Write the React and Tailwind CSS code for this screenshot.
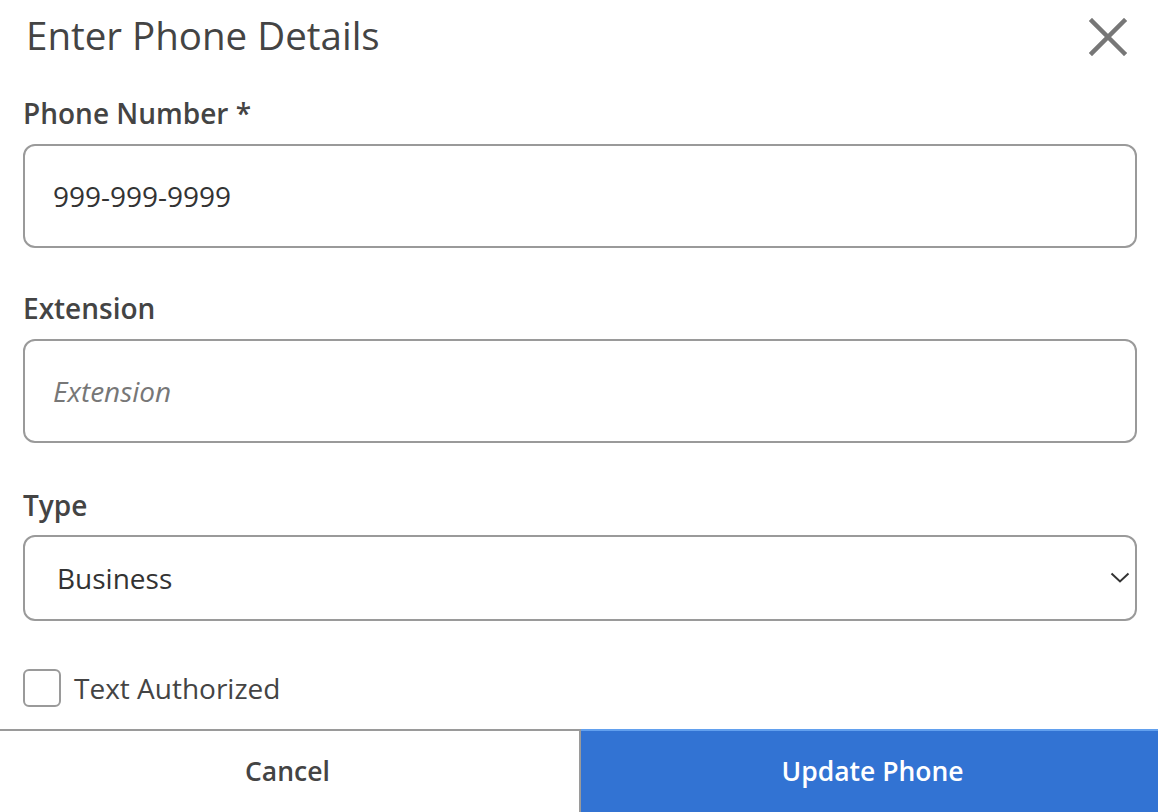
import { useState } from 'react';

const font = { fontFamily: '"Open Sans", "Noto Sans", sans-serif' };

const CloseIcon = () => (
  <svg width="38" height="38" viewBox="0 0 38 38" fill="none">
    <path d="M3 3 L35 35 M35 3 L3 35" stroke="#777" strokeWidth="4.5" strokeLinecap="square" />
  </svg>
);

const Chevron = () => (
  <svg width="20" height="11" viewBox="0 0 20 11" fill="none">
    <path d="M1.5 1.5 L10 9.5 L18.5 1.5" stroke="#333" strokeWidth="2" />
  </svg>
);

const Label = ({ children, className = '' }) => (
  <label className={`block text-[28px] leading-[36px] font-semibold text-[#444] ${className}`}>
    {children}
  </label>
);

export default function App() {
  const [phone, setPhone] = useState('999-999-9999');
  const [ext, setExt] = useState('');
  const [type, setType] = useState('Business');
  const [textOk, setTextOk] = useState(false);

  return (
    <div className="w-[1158px] h-[812px] bg-white flex flex-col overflow-hidden" style={font}>
      {/* ── header ───────────────────────────────────────────── */}
      <div className="h-[95px] flex items-start justify-between pl-[26px] pr-[31px]">
        <h1 className="mt-[10px] text-[38.5px] leading-[50px] font-normal text-[#444]">Enter Phone Details</h1>
        <button className="mt-[18px]">
          <CloseIcon />
        </button>
      </div>

      {/* ── form ─────────────────────────────────────────────── */}
      <div className="flex-1 flex flex-col pl-[23px] pr-[21px]">
        <Label>Phone Number *</Label>
        <input
          value={phone}
          onChange={(e) => setPhone(e.target.value)}
          className="mt-[13px] h-[104px] w-full rounded-[12px] border-2 border-[#9a9a9a] px-[28px] text-[28px] text-[#333] outline-none"
        />

        <Label className="mt-[42px]">Extension</Label>
        <input
          value={ext}
          onChange={(e) => setExt(e.target.value)}
          placeholder="Extension"
          className="mt-[13px] h-[104px] w-full rounded-[12px] border-2 border-[#9a9a9a] px-[28px] text-[28px] text-[#333] outline-none placeholder:italic placeholder:text-[#777]"
        />

        <Label className="mt-[44px]">Type</Label>
        <div className="relative mt-[12px]">
          <select
            value={type}
            onChange={(e) => setType(e.target.value)}
            className="appearance-none h-[86px] w-full rounded-[12px] border-2 border-[#9a9a9a] bg-white pl-[32px] pr-[40px] text-[28px] text-[#333] outline-none"
          >
            <option>Business</option>
            <option>Home</option>
            <option>Mobile</option>
          </select>
          <span className="pointer-events-none absolute right-[7px] top-[37px]">
            <Chevron />
          </span>
        </div>

        <label className="mt-[48px] flex items-center gap-[13px] cursor-pointer">
          <input
            type="checkbox"
            checked={textOk}
            onChange={(e) => setTextOk(e.target.checked)}
            className="appearance-none w-[38px] h-[38px] rounded-[6px] border-2 border-[#9a9a9a] bg-white"
          />
          <span className="text-[28px] leading-[36px] text-[#444]">Text Authorized</span>
        </label>
      </div>

      {/* ── footer ───────────────────────────────────────────── */}
      <div className="h-[83px] flex border-t-2 border-[#9a9a9a]">
        <button className="w-[581px] pr-[4px] bg-white border-r-2 border-[#9a9a9a] text-[26.5px] font-semibold text-[#444]">
          Cancel
        </button>
        <button className="flex-1 pl-[6px] -mt-[2px] bg-[#3273d3] border-t-2 border-[#62a0ee] text-[26.5px] font-semibold text-white">
          Update Phone
        </button>
      </div>
    </div>
  );
}
